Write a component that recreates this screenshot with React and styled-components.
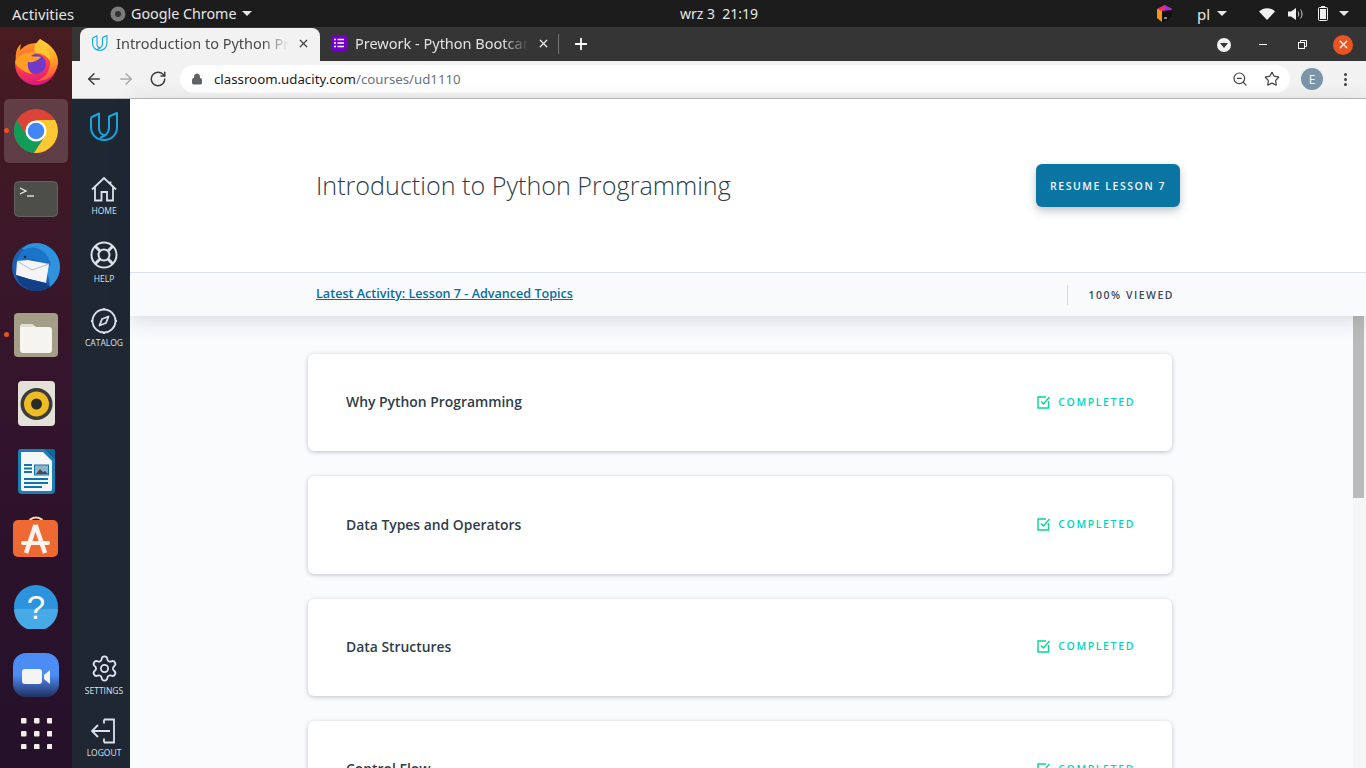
import styled, { createGlobalStyle } from "styled-components";
import { ArrowLeft, ArrowRight, RotateCw, Star, ZoomOut, Lock, X, Plus, Settings } from "lucide-react";

const lessons = ["Why Python Programming", "Data Types and Operators", "Data Structures", "Control Flow"];

const GlobalStyle = createGlobalStyle`
  html, body { margin: 0; padding: 0; height: 100%; overflow: hidden; background: #1d1d1d; }
  * { box-sizing: border-box; }
`;

const Screen = styled.div`
  width: 1366px;
  height: 768px;
  display: flex;
  flex-direction: column;
  overflow: hidden;
  font-family: "Open Sans", sans-serif;
`;

const TopBar = styled.div`
  height: 27px;
  flex: none;
  background: #1c1c1c;
  color: #e6e6e6;
  display: flex;
  align-items: center;
  font-family: "Noto Sans", sans-serif;
  font-size: 14.3px;
`;

const Activities = styled.span`
  width: 110px;
  padding-left: 12px;
  font-size: 14.9px;
`;

const AppMenu = styled.div`
  width: 570px;
  display: flex;
  align-items: center;
  gap: 5px;
`;

const Caret = styled.span`
  width: 0;
  height: 0;
  margin-left: ${(p) => p.$ml || 0}px;
  border-left: 5px solid transparent;
  border-right: 5px solid transparent;
  border-top: 5px solid #e6e6e6;
`;

const Clock = styled.span`
  width: 475px;
  font-size: 14px;
`;

const Tray = styled.div`
  flex: 1;
  display: flex;
  align-items: center;
`;

const LangMenu = styled.div`
  display: flex;
  align-items: center;
  gap: 7px;
  margin-left: 25px;
  width: 62px;
  font-size: 15px;
`;

const Desk = styled.div`
  flex: 1;
  display: flex;
  min-height: 0;
`;

const Dock = styled.div`
  width: 72px;
  flex: none;
  padding-top: 2px;
  display: flex;
  flex-direction: column;
  background: linear-gradient(180deg, #481c20 0%, #35152c 45%, #2b122a 70%, #26112a 100%);
`;

const DockItem = styled.div`
  position: relative;
  flex: none;
  height: ${(p) => p.$h || 68}px;
  display: flex;
  align-items: center;
  justify-content: center;
  &::before {
    content: "";
    position: absolute;
    inset: 2px 4px;
    border-radius: 5px;
    background: ${(p) => (p.$active ? "rgba(255,255,255,0.16)" : "transparent")};
  }
  &::after {
    content: "";
    position: absolute;
    left: 4px;
    top: 50%;
    margin-top: -3px;
    width: 5px;
    height: 5px;
    border-radius: 50%;
    background: ${(p) => (p.$running ? "#e95420" : "transparent")};
  }
  svg { position: relative; }
`;

const Browser = styled.div`
  flex: 1;
  min-width: 0;
  display: flex;
  flex-direction: column;
`;

const TabStrip = styled.div`
  height: 34px;
  flex: none;
  background: #353535;
  display: flex;
  align-items: flex-end;
  padding-left: 8px;
  color: #fff;
`;

const Tab = styled.div`
  position: relative;
  width: ${(p) => p.$w}px;
  height: 33px;
  padding: 0 ${(p) => p.$padEnd}px 3px ${(p) => p.$pad}px;
  display: flex;
  align-items: center;
  gap: 8px;
  border-radius: 8px 8px 0 0;
  background: ${(p) => (p.$active ? "#f2f2f2" : "transparent")};
  color: ${(p) => (p.$active ? "#4a4a4a" : "#e2e2e2")};
  font-family: "Noto Sans", sans-serif;
  font-size: 14.5px;
  svg { flex: none; }
`;

const TabTitle = styled.span`
  flex: 1;
  min-width: 0;
  overflow: hidden;
  white-space: nowrap;
  -webkit-mask-image: linear-gradient(90deg, #000 85%, transparent 100%);
  mask-image: linear-gradient(90deg, #000 85%, transparent 100%);
`;

const TabDivider = styled.span`
  width: 1px;
  height: 20px;
  margin: 0 0 7px 3px;
  background: #767676;
`;

const NewTab = styled.span`
  margin: 0 auto 6px 13px;
  height: 20px;
  display: flex;
`;

const WindowControls = styled.div`
  display: flex;
  align-items: center;
  height: 33px;
`;

const ProfileDrop = styled.span`
  width: 14px;
  height: 14px;
  border-radius: 50%;
  background: #f4f4f4;
  display: flex;
  align-items: center;
  justify-content: center;
  margin-right: 14px;
  &::after {
    content: "";
    margin-top: 2px;
    border-left: 4px solid transparent;
    border-right: 4px solid transparent;
    border-top: 5px solid #353535;
  }
`;

const WinButton = styled.span`
  width: ${(p) => p.$w}px;
  display: flex;
  align-items: center;
  justify-content: center;
`;

const CloseButton = styled.span`
  width: 20px;
  height: 20px;
  margin: 0 13px 0 10px;
  border-radius: 50%;
  background: #e95420;
  display: flex;
  align-items: center;
  justify-content: center;
`;

const Toolbar = styled.div`
  height: 38px;
  flex: none;
  background: #f2f2f2;
  border-bottom: 1px solid #bdbdbd;
  display: flex;
  align-items: center;
  padding: 0 0 1px 13px;
  color: #3c3c3c;
`;

const NavButton = styled.span`
  width: 32px;
  display: flex;
  color: ${(p) => (p.$off ? "#aaaaaa" : "#3c3c3c")};
`;

const Omnibox = styled.div`
  width: 1110px;
  height: 28px;
  margin-left: -1px;
  padding: 0 10px 0 11px;
  border-radius: 14px;
  background: #fff;
  display: flex;
  align-items: center;
  font-family: "Noto Sans", sans-serif;
  font-size: 13.25px;
  color: #1a1a1a;
`;

const UrlPath = styled.span`
  color: #6b7280;
`;

const UrlText = styled.span`
  flex: 1;
  margin-left: 11px;
`;

const OmniIcon = styled.span`
  display: flex;
  margin-left: ${(p) => p.$ml || 0}px;
`;

const Avatar = styled.span`
  width: 22px;
  height: 22px;
  margin-left: 11px;
  border-radius: 50%;
  background: #7b94a8;
  color: #f3f6f8;
  font-family: "Noto Sans", sans-serif;
  font-size: 12px;
  display: flex;
  align-items: center;
  justify-content: center;
`;

const MenuDots = styled.span`
  width: 3px;
  height: 3px;
  margin-left: 21px;
  border-radius: 50%;
  background: #454545;
  box-shadow: 0 -5px 0 #454545, 0 5px 0 #454545;
`;

const Page = styled.div`
  flex: 1;
  min-height: 0;
  display: flex;
`;

const Sidebar = styled.nav`
  width: 58px;
  flex: none;
  background: #1f2733;
  display: flex;
  flex-direction: column;
  align-items: center;
  padding: 13px 0 6px 6px;
`;

const SideLink = styled.div`
  width: 52px;
  flex: none;
  height: ${(p) => p.$h}px;
  display: flex;
  flex-direction: column;
  align-items: center;
  color: #dbe2ea;
  font-size: 8.5px;
  line-height: 12px;
  gap: ${(p) => p.$gap}px;
  margin-top: ${(p) => (p.$push ? "auto" : "0")};
`;

const Logo = styled.div`
  height: 36px;
  margin-bottom: 28px;
`;

const Main = styled.main`
  flex: 1;
  min-width: 0;
  display: flex;
  flex-direction: column;
  background: #fafbfd;
`;

const Hero = styled.header`
  position: relative;
  z-index: 1;
  flex: none;
  box-shadow: 0 4px 20px rgba(30, 40, 60, 0.16);
`;

const HeroTop = styled.div`
  height: 174px;
  padding: 0 186px;
  background: #fff;
  border-bottom: 1px solid #dbe2ec;
  display: flex;
  align-items: center;
  justify-content: space-between;
`;

const Title = styled.h1`
  margin: 0 0 1px;
  font-size: 25.15px;
  font-weight: 300;
  color: #2e3d49;
`;

const ResumeButton = styled.button`
  width: 144px;
  height: 43px;
  padding: 0;
  border: 0;
  border-radius: 6px;
  background: #0a74a3;
  color: #f2f8fb;
  font: 600 10.5px "Open Sans", sans-serif;
  letter-spacing: 1.55px;
  box-shadow: 0 4px 8px rgba(30, 40, 60, 0.28);
`;

const HeroBar = styled.div`
  height: 43px;
  padding: 0 192px 0 186px;
  background: #f9fafc;
  display: flex;
  align-items: center;
`;

const ActivityLink = styled.a`
  flex: 1;
  margin-bottom: 2px;
  font-size: 12.6px;
  font-weight: 600;
  color: #0a6f9e;
  text-decoration: underline;
`;

const Viewed = styled.span`
  height: 20px;
  padding-left: 21px;
  border-left: 1px solid #d6dbe2;
  font-size: 10.5px;
  font-weight: 600;
  line-height: 20px;
  letter-spacing: 1.5px;
  color: #3f4a57;
`;

const Body = styled.div`
  flex: 1;
  min-height: 0;
  display: flex;
  overflow: hidden;
`;

const CardList = styled.div`
  flex: 1;
  padding: 38px 0 0 178px;
  display: flex;
  flex-direction: column;
  gap: 25px;
`;

const Card = styled.section`
  width: 864px;
  height: 97.33px;
  flex: none;
  padding: 0 37px 1.73px 38px;
  border-radius: 6px;
  background: #fff;
  box-shadow: 0 1px 4px rgba(30, 40, 60, 0.28);
  display: flex;
  align-items: center;
  justify-content: space-between;
`;

const CardTitle = styled.h2`
  margin: 0;
  font-size: 13.9px;
  font-weight: 600;
  color: #2e3d49;
`;

const Status = styled.span`
  display: flex;
  align-items: center;
  gap: 7px;
  margin-bottom: 0.4px;
  font-size: 10.5px;
  font-weight: 600;
  letter-spacing: 1.63px;
  color: #00d5bf;
`;

const Track = styled.div`
  width: 13px;
  flex: none;
  background: #f6f6f6;
`;

const Thumb = styled.div`
  width: 11px;
  height: 182px;
  background: #bababa;
`;

const Firefox = () => (
  <svg width="48" height="48" viewBox="0 1 48 48">
    <defs>
      <linearGradient id="ffBody" x1="0.3" y1="0" x2="0.5" y2="1">
        <stop offset="0" stopColor="#ff9a1f" />
        <stop offset="0.55" stopColor="#ff3d50" />
        <stop offset="1" stopColor="#d9167f" />
      </linearGradient>
      <linearGradient id="ffFlame" x1="0.4" y1="0" x2="0.6" y2="1">
        <stop offset="0" stopColor="#ffd93b" />
        <stop offset="0.6" stopColor="#ff9a24" />
        <stop offset="1" stopColor="#ff4a3d" />
      </linearGradient>
    </defs>
    <circle cx="24" cy="26" r="21" fill="url(#ffBody)" />
    <path d="M28 1C26 6 29 10 33 13c6 5 6 12 4 18-2 7-8 11-14 12 10 1 21-5 23-17 1-10-6-19-18-25z" fill="url(#ffFlame)" />
    <path d="M28 1c-6 5-7 11-4 14 6 0 11 3 14 8 1-8-4-16-10-22z" fill="#ffc533" />
    <circle cx="24" cy="26" r="10" fill="#7139c9" />
    <path d="M9 6C8 10 8 13 9 15L4 22C3 15 5 9 9 6z" fill="#ff8a1f" />
    <path d="M3 24c4-7 9-10 14-9 3-2 7-1 7 0-2 0-3 2-5 3 3 1 6 0 10 1-3 4-9 6-13 5-1 5 1 9 4 12-8-2-15-6-17-12z" fill="#ff9d24" />
  </svg>
);

const Chrome = () => (
  <svg width="46" height="46" viewBox="0 0 46 46">
    <circle cx="23" cy="23" r="22" fill="#db4437" />
    <path d="M3.950 12A22 22 0 0 0 21 44.900L32 28 14 28.500z" fill="#0f9d58" />
    <path d="M23 12H42A22 22 0 0 1 21 44.900L32 28z" fill="#fcc934" />
    <circle cx="23" cy="23" r="10.5" fill="#fff" />
    <circle cx="23" cy="23" r="8.3" fill="#4285f4" />
  </svg>
);

const Terminal = () => (
  <svg width="44" height="36" viewBox="0 0 44 36">
    <rect x="0.5" y="0.5" width="43" height="35" rx="4" fill="#4d4d49" stroke="#62625e" />
    <path d="M6 7l6 3-6 3" fill="none" stroke="#f0f0f0" strokeWidth="1.3" />
    <path d="M13 15h7" stroke="#f0f0f0" strokeWidth="1.3" />
  </svg>
);

const Thunderbird = () => (
  <svg width="50" height="50" viewBox="0 0 50 50">
    <circle cx="25" cy="25" r="24" fill="#1c5fb0" />
    <path d="M25 1c13 0 24 11 24 24 0 8-4 15-10 20-1-9-3-19-9-27-5-6-12-9-19-11 4-4 9-6 14-6z" fill="#2f92dd" />
    <path d="M6 19C8 10 16 4 25 6c8 2 13 8 15 17l-4 2-14-8z" fill="#1a74c9" />
    <circle cx="14" cy="15" r="1.3" fill="#10233f" />
    <path d="M6 19l11-1 21 4-3 19-17-4L5 33z" fill="#f5f5f7" />
    <path d="M6 19l15 9 17-6" fill="none" stroke="#b9bcc4" strokeWidth="1" />
    <path d="M5 33l13 4 17 4 4 4c-4 3-9 4-14 4-9 0-17-6-20-16z" fill="#123f85" />
  </svg>
);

const Files = () => (
  <svg width="44" height="44" viewBox="0 0 44 44">
    <rect width="44" height="44" rx="4" fill="#a49d88" />
    <path d="M6 14a3 3 0 0 1 3-3h9l4 3h13a3 3 0 0 1 3 3v20a3 3 0 0 1-3 3H9a3 3 0 0 1-3-3z" fill="#f6f4ef" />
    <path d="M6 14a3 3 0 0 1 3-3h9l4 3z" fill="#e2ded2" />
  </svg>
);

const Rhythmbox = () => (
  <svg width="37" height="45" viewBox="0 0 37 45">
    <rect width="37" height="45" rx="4" fill="#e4e1d8" />
    <circle cx="18.5" cy="23" r="16" fill="#3c3c3c" />
    <circle cx="18.5" cy="23" r="12.5" fill="#eebd24" />
    <circle cx="18.5" cy="23" r="5.5" fill="#2a2a2a" />
  </svg>
);

const Writer = () => (
  <svg width="37" height="45" viewBox="0 0 37 45">
    <path d="M3 0h24l10 10v31a4 4 0 0 1-4 4H4a4 4 0 0 1-4-4V3a3 3 0 0 1 3-3z" fill="#1b7fb5" />
    <path d="M3 3h22l9 9v28a2 2 0 0 1-2 2H5a2 2 0 0 1-2-2z" fill="#f5f6f7" />
    <path d="M27 0l10 10V2a2 2 0 0 0-2-2z" fill="#0d6a9e" />
    <path d="M6 16h8M6 19.5h8M6 23h8M6 30h24M6 34h24M6 38h18" stroke="#1272ab" strokeWidth="2" />
    <rect x="16.5" y="16" width="14" height="10" fill="#8fb4cf" stroke="#1272ab" />
    <path d="M18 25l4-5 3 3 2-1 3 3z" fill="#4a4a4a" />
  </svg>
);

const Software = () => (
  <svg width="46" height="46" viewBox="0 0 46 46">
    <path d="M15 9c0-10 16-10 16 0" fill="none" stroke="#f5d5a8" strokeWidth="2" />
    <rect y="4" width="45" height="37" rx="5" fill="#ef6a33" />
    <path d="M22.5 9L13 37M22.5 9L32 37" stroke="#fdf3ec" strokeWidth="4.5" />
    <rect x="8" y="25" width="29" height="4" rx="2" fill="#fdf3ec" />
  </svg>
);

const HelpIcon = () => (
  <svg width="44" height="44" viewBox="0 0 44 44">
    <circle cx="22" cy="22" r="22" fill="#2d93dc" />
    <path d="M0 24h44a22 22 0 0 1-44 0z" fill="#47a9e6" />
    <text x="22" y="34" textAnchor="middle" fontFamily="Liberation Sans, sans-serif" fontSize="33" fill="#fff">?</text>
  </svg>
);

const Zoom = () => (
  <svg width="46" height="44" viewBox="0 0 46 44">
    <defs>
      <linearGradient id="zm" x1="0" y1="0" x2="0" y2="1">
        <stop offset="0.5" stopColor="#4c8cf5" />
        <stop offset="1" stopColor="#22305e" />
      </linearGradient>
    </defs>
    <rect width="46" height="44" rx="13" fill="url(#zm)" />
    <rect x="9" y="16" width="20" height="15" rx="3" fill="#f4f4f4" />
    <path d="M31 22l6-5v14l-6-5z" fill="#f4f4f4" />
  </svg>
);

const AppGrid = () => (
  <svg width="31" height="31" viewBox="0 0 31 31" fill="#f1efe9">
    {[0, 13, 26].flatMap((y) =>
      [0, 13, 26].map((x) => <rect key={`${x}-${y}`} x={x} y={y} width="5.5" height="5.5" rx="1" />)
    )}
  </svg>
);

const UdacityLogo = ({ size = 29 }) => (
  <svg width={size} height={size} viewBox="0 0 29 29" fill="none" stroke="#17a7e0" strokeWidth="2" strokeLinejoin="round">
    <path d="M1 5.500L9 1.500V16C9 20 11.500 23 15 23" />
    <path d="M1 5.500V15C1 23 7 28 14 28C21 28 27 23 27 15V1L19 4.500V16C19 21 14 24.500 10 26" />
  </svg>
);

const HomeIcon = () => (
  <svg width="28" height="28" viewBox="0 0 28 28" fill="none" stroke="#dbe2ea" strokeWidth="1.8">
    <path d="M2 13.500L14 2l12 11.500M5 11v13.500h6.500V16h5.500v8.500H23V11M20.500 5.500V8" />
  </svg>
);

const HelpRing = () => (
  <svg width="28" height="28" viewBox="0 0 28 28" fill="none" stroke="#dbe2ea" strokeWidth="2">
    <circle cx="14" cy="14" r="12.500" />
    <circle cx="14" cy="14" r="5.500" />
    <path d="M5 5l5 5M23 5l-5 5M5 23l5-5M23 23l-5-5" strokeWidth="3" />
  </svg>
);

const Catalog = () => (
  <svg width="28" height="28" viewBox="0 0 28 28" fill="none" stroke="#dbe2ea" strokeWidth="1.800">
    <circle cx="14" cy="14" r="11.500" />
    <path d="M14 1v2M14 25v2M1 14h2M25 14h2" />
    <path d="M18.500 9.500l-2.500 6.500-6.500 2.500 2.500-6.500z" strokeLinejoin="round" />
  </svg>
);

const Logout = () => (
  <svg width="28" height="26" viewBox="0 0 28 26" fill="none" stroke="#dbe2ea" strokeWidth="1.800">
    <path d="M14 1.500h10V24.500H14M14 1.500v4M14 24.500v-4M20 13H2M8 7l-6 6 6 6" />
  </svg>
);

const Check = () => (
  <svg width="14" height="14" viewBox="0 0 14 14" fill="none" stroke="#02d98f" strokeWidth="1.400">
    <path d="M11.500 6v7H1V2h8" />
    <path d="M4 6.500l2.500 2.500L12.500 2" />
  </svg>
);

const FormsIcon = () => (
  <svg width="16" height="16" viewBox="0 0 16 16">
    <rect width="16" height="16" rx="2" fill="#7200c4" />
    <path d="M3 4.500h2M6.500 4.500H13M3 8h2M6.500 8H13M3 11.500h2M6.500 11.500H13" stroke="#fff" strokeWidth="1.600" />
  </svg>
);

const AppChip = () => (
  <svg width="16" height="16" viewBox="0 0 16 16">
    <circle cx="8" cy="8" r="7.500" fill="#7c7c7c" />
    <circle cx="8" cy="8" r="3" fill="#333" />
  </svg>
);

const JetBrains = () => (
  <svg width="15" height="17" viewBox="0 0 15 17" style={{ marginLeft: 2 }}>
    <path d="M7.500 0L15 4v9l-7.500 4L0 13V4z" fill="#ee2f6b" />
    <path d="M7.500 0L15 4v5L7.500 6z" fill="#a22fd8" />
    <path d="M0 4l5 2v11L0 13z" fill="#f7941e" />
    <path d="M5 6l10-1v8l-7 4H5z" fill="#111" />
    <path d="M7 13h3" stroke="#fff" />
  </svg>
);

const Wifi = () => (
  <svg width="16" height="12" viewBox="0 0 16 12">
    <path d="M0 3.500C4.500-1 11.500-1 16 3.500L8 12z" fill="#f2f2f2" />
  </svg>
);

const Volume = () => (
  <svg width="15" height="14" viewBox="0 0 15 14" fill="none" style={{ marginLeft: 13 }}>
    <path d="M0 4.500h3L8 1v12L3 9.500H0z" fill="#f2f2f2" />
    <path d="M10 4.500c1 1.500 1 3.500 0 5M12.500 2.500c2 3 2 6 0 9" stroke="#cfcfcf" />
  </svg>
);

const Battery = () => (
  <svg width="10" height="15" viewBox="0 0 10 15" style={{ marginLeft: 15 }}>
    <rect x="3" width="4" height="2" fill="#f2f2f2" />
    <rect x="0.500" y="1.500" width="9" height="13" rx="1" fill="none" stroke="#f2f2f2" />
    <rect x="2" y="3" width="6" height="10" fill="#f2f2f2" />
  </svg>
);

const App = () => {
  return (
    <Screen>
      <GlobalStyle />
      <TopBar>
        <Activities>Activities</Activities>
        <AppMenu>
          <AppChip />
          Google Chrome
          <Caret />
        </AppMenu>
        <Clock>wrz 3&nbsp;&nbsp;21:19</Clock>
        <Tray>
          <JetBrains />
          <LangMenu>
            pl
            <Caret />
          </LangMenu>
          <Wifi />
          <Volume />
          <Battery />
          <Caret $ml={11} />
        </Tray>
      </TopBar>
      <Desk>
        <Dock>
          <DockItem><Firefox /></DockItem>
          <DockItem $active $running><Chrome /></DockItem>
          <DockItem><Terminal /></DockItem>
          <DockItem><Thunderbird /></DockItem>
          <DockItem $running><Files /></DockItem>
          <DockItem><Rhythmbox /></DockItem>
          <DockItem><Writer /></DockItem>
          <DockItem><Software /></DockItem>
          <DockItem><HelpIcon /></DockItem>
          <DockItem><Zoom /></DockItem>
          <DockItem $h={48}><AppGrid /></DockItem>
        </Dock>
        <Browser>
          <TabStrip>
            <Tab $active $w={240} $pad={12} $padEnd={10}>
              <UdacityLogo size={16} />
              <TabTitle>Introduction to Python Programming</TabTitle>
              <X size={13} strokeWidth={2.4} color="#444" />
            </Tab>
            <Tab $w={235} $pad={11} $padEnd={5}>
              <FormsIcon />
              <TabTitle>Prework - Python Bootcamp</TabTitle>
              <X size={13} strokeWidth={2.4} color="#eee" />
            </Tab>
            <TabDivider />
            <NewTab><Plus size={18} strokeWidth={2.4} /></NewTab>
            <WindowControls>
              <ProfileDrop />
              <WinButton $w={36}><svg width="8" height="2"><rect width="8" height="1" fill="#fff" /></svg></WinButton>
              <WinButton $w={42}>
                <svg width="9" height="9" fill="none" stroke="#fff"><path d="M2.500 2V.5h6v6H7" /><rect x=".5" y="2.500" width="6" height="6" /></svg>
              </WinButton>
              <CloseButton><X size={13} strokeWidth={2.2} color="#fff" /></CloseButton>
            </WindowControls>
          </TabStrip>
          <Toolbar>
            <NavButton><ArrowLeft size={18} strokeWidth={2} /></NavButton>
            <NavButton $off><ArrowRight size={18} strokeWidth={2} /></NavButton>
            <NavButton><RotateCw size={18} strokeWidth={2} /></NavButton>
            <Omnibox>
              <Lock size={12} fill="#5f6368" color="#5f6368" strokeWidth={2} />
              <UrlText>classroom.udacity.com<UrlPath>/courses/ud1110</UrlPath></UrlText>
              <OmniIcon><ZoomOut size={16} color="#444" strokeWidth={1.8} /></OmniIcon>
              <OmniIcon $ml={16}><Star size={16} color="#444" strokeWidth={1.8} /></OmniIcon>
            </Omnibox>
            <Avatar>E</Avatar>
            <MenuDots />
          </Toolbar>
          <Page>
            <Sidebar>
              <Logo><UdacityLogo /></Logo>
              <SideLink $h={65} $gap={1}><HomeIcon />HOME</SideLink>
              <SideLink $h={66} $gap={4}><HelpRing />HELP</SideLink>
              <SideLink $h={66} $gap={2}><Catalog />CATALOG</SideLink>
              <SideLink $push $h={64} $gap={2}><Settings size={29} strokeWidth={1.5} />SETTINGS</SideLink>
              <SideLink $h={44} $gap={3}><Logout />LOGOUT</SideLink>
            </Sidebar>
            <Main>
              <Hero>
                <HeroTop>
                  <Title>Introduction to Python Programming</Title>
                  <ResumeButton>RESUME LESSON 7</ResumeButton>
                </HeroTop>
                <HeroBar>
                  <ActivityLink>Latest Activity: Lesson 7 - Advanced Topics</ActivityLink>
                  <Viewed>100% VIEWED</Viewed>
                </HeroBar>
              </Hero>
              <Body>
                <CardList>
                  {lessons.map((name) => (
                    <Card key={name}>
                      <CardTitle>{name}</CardTitle>
                      <Status><Check />COMPLETED</Status>
                    </Card>
                  ))}
                </CardList>
                <Track><Thumb /></Track>
              </Body>
            </Main>
          </Page>
        </Browser>
      </Desk>
    </Screen>
  );
};

export default App;
